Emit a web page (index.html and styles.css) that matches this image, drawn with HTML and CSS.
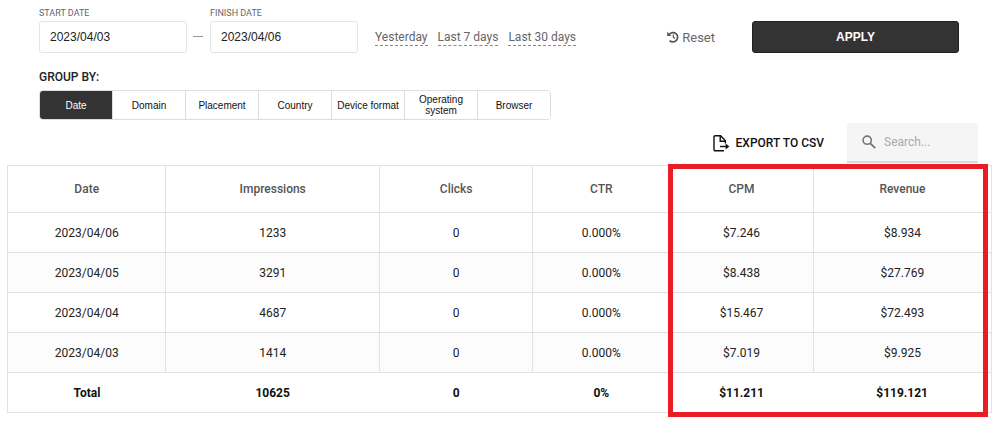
FILE: index.html
```
<!DOCTYPE html>
<html lang="en">
<head>
  <meta charset="UTF-8">
  <title>Statistics</title>
  <meta name="viewport" content="width=device-width, initial-scale=1">
  <link rel="stylesheet" href="styles.css">
</head>
<body>
  <form class="filters">
    <div class="filter-row">
      <div class="field">
        <label for="startDate">START DATE</label>
        <input type="text" id="startDate" value="2023/04/03">
      </div>
      <span class="dash"></span>
      <div class="field">
        <label for="finishDate">FINISH DATE</label>
        <input type="text" id="finishDate" value="2023/04/06">
      </div>
      <div class="presets">
        <a href="#">Yesterday</a>
        <a href="#">Last 7 days</a>
        <a href="#">Last 30 days</a>
      </div>
      <button class="reset-btn" type="reset">
        <svg width="12" height="12" viewBox="0 0 12 12" fill="none" stroke="#555" stroke-width="1.7">
          <path d="M2.2 3.4A4.7 4.7 0 1 1 2.6 9.6"/>
          <path d="M0.2 0.8V5H4.4Z" fill="#555" stroke="none"/>
          <path d="M6.3 3.4V6.3L8 7.5" stroke-width="1.2"/>
        </svg>
        Reset
      </button>
      <button class="apply-btn" type="submit">APPLY</button>
    </div>

    <div class="group-title">GROUP BY:</div>
    <div class="group">
      <button type="button" class="active">Date</button>
      <button type="button">Domain</button>
      <button type="button">Placement</button>
      <button type="button">Country</button>
      <button type="button">Device format</button>
      <button type="button">Operating system</button>
      <button type="button">Browser</button>
    </div>
  </form>

  <div class="toolbar">
    <button class="export-btn" type="button">
      <svg width="17" height="17" viewBox="0 0 17 17" fill="none" stroke="#111" stroke-width="1.4">
        <path d="M11 15.7H2.2Q1 15.7 1 14.5V2Q1 0.8 2.2 0.8H7.6L12.4 5.8V8.6"/>
        <path d="M7.2 1V6.2H12.4"/>
        <path d="M7 11.5H15"/>
        <path d="M12.6 8.6L16.4 11.5L12.6 14.4Z" fill="#111" stroke="none"/>
      </svg>
      EXPORT TO CSV
    </button>
    <label class="search">
      <svg width="14" height="14" viewBox="0 0 14 14" fill="none" stroke="#777" stroke-width="1.6">
        <circle cx="5.2" cy="5.2" r="4.1"/>
        <path d="M8.3 8.3L13.2 13.2" stroke-width="1.9"/>
      </svg>
      <input type="text" placeholder="Search..." aria-label="Search">
    </label>
  </div>

  <div class="table-wrap">
    <table>
      <colgroup>
        <col class="c-date">
        <col class="c-impressions">
        <col class="c-clicks">
        <col class="c-ctr">
        <col class="c-cpm">
        <col class="c-revenue">
      </colgroup>
      <thead>
        <tr><th>Date</th><th>Impressions</th><th>Clicks</th><th>CTR</th><th>CPM</th><th>Revenue</th></tr>
      </thead>
      <tbody>
        <tr><td>2023/04/06</td><td>1233</td><td>0</td><td>0.000%</td><td>$7.246</td><td>$8.934</td></tr>
        <tr><td>2023/04/05</td><td>3291</td><td>0</td><td>0.000%</td><td>$8.438</td><td>$27.769</td></tr>
        <tr><td>2023/04/04</td><td>4687</td><td>0</td><td>0.000%</td><td>$15.467</td><td>$72.493</td></tr>
        <tr><td>2023/04/03</td><td>1414</td><td>0</td><td>0.000%</td><td>$7.019</td><td>$9.925</td></tr>
      </tbody>
      <tfoot>
        <tr><td>Total</td><td>10625</td><td>0</td><td>0%</td><td>$11.211</td><td>$119.121</td></tr>
      </tfoot>
    </table>
    <div class="highlight"></div>
  </div>
</body>
</html>
```
FILE: styles.css
```
* { box-sizing: border-box; }
body {
  margin: 0;
  padding: 8px 8px 24px 7px;
  font-family: Roboto, Arial, sans-serif;
  font-size: 12px;
  color: #222;
  background: #fff;
}
button { font-family: inherit; cursor: pointer; }

/* filters */
.filters { padding: 0 33px 0 32px; }
.filter-row {
  display: flex;
  align-items: flex-end;
}
.field { flex: 0 1 148px; min-width: 0; }
.field label {
  display: block;
  font-size: 9px;
  line-height: 10px;
  margin-bottom: 3px;
  color: #666;
}
.field input {
  display: block;
  width: 100%;
  height: 32px;
  padding: 0 10px;
  border: 1px solid #e4e4e4;
  border-radius: 3px;
  font-family: "Liberation Sans", Arial, sans-serif;
  font-size: 12px;
  color: #222;
  outline: none;
}
.dash {
  width: 10px;
  height: 1px;
  margin: 0 7px 16px 6px;
  background: #999;
}
.presets {
  display: flex;
  gap: 10px;
  margin: 0 0 7px 17px;
}
.presets a {
  color: #666;
  line-height: 15px;
  border-bottom: 1px dashed #888;
  text-decoration: none;
  white-space: nowrap;
}
.reset-btn {
  display: flex;
  align-items: center;
  gap: 3px;
  height: 32px;
  margin-left: auto;
  padding: 0;
  border: none;
  background: none;
  font-size: 13px;
  color: #666;
}
.apply-btn {
  flex: 0 1 207px;
  height: 32px;
  margin-left: 37px;
  border: 1px solid #222;
  border-radius: 3px;
  background: #333;
  color: #fff;
  font-family: "Liberation Sans", Arial, sans-serif;
  font-size: 12px;
  font-weight: 700;
}
.group-title {
  margin: 17px 0 6px;
  font-size: 12px;
  line-height: 14px;
  font-weight: 500;
}
.group {
  display: flex;
  width: 512px;
  max-width: 100%;
  border: 1px solid #ddd;
  border-radius: 4px;
  overflow: hidden;
}
.group button {
  flex: 1 1 0;
  height: 28px;
  padding: 0;
  border: none;
  border-left: 1px solid #ddd;
  background: #fff;
  color: #111;
  font-family: "Liberation Sans", Arial, sans-serif;
  font-size: 10px;
  line-height: 11px;
}
.group button:first-child { border-left: none; }
.group button.active { background: #333; color: #fff; }

/* export + search */
.toolbar {
  display: flex;
  justify-content: flex-end;
  align-items: center;
  gap: 23px;
  padding: 3px 14px 2px 0;
}
.export-btn {
  display: flex;
  align-items: center;
  gap: 6px;
  padding: 0;
  border: none;
  background: none;
  color: #111;
  font-size: 12px;
  font-weight: 500;
}
.search {
  display: flex;
  align-items: center;
  gap: 8px;
  width: 131px;
  height: 40px;
  padding: 0 15px;
  border-bottom: 2px solid #ddd8e0;
  border-radius: 3px 3px 0 0;
  background: #f5f5f5;
}
.search svg { flex: none; }
.search input {
  width: 100%;
  min-width: 0;
  padding: 0;
  border: none;
  background: none;
  outline: none;
  font-family: inherit;
  font-size: 12px;
}
.search input::placeholder { color: #aaa; }

/* report */
.table-wrap { position: relative; }
table {
  width: 100%;
  table-layout: fixed;
  border-collapse: collapse;
  border: 1px solid #e2e2e2;
  text-align: center;
}
.c-date { width: 16.1%; }
.c-impressions { width: 21.7%; }
.c-clicks { width: 15.6%; }
.c-ctr { width: 13.9%; }
.c-cpm { width: 14.6%; }
.c-revenue { width: 18.1%; }
th, td {
  height: 40px;
  padding: 0;
  border: 1px solid #e2e2e2;
}
th { height: 47px; color: #555; font-weight: 500; }
tbody tr:nth-child(even) { background: #fcfcfc; }
tfoot td { border-left: none; border-right: none; font-weight: 700; color: #111; }

/* red frame over the money columns */
.highlight {
  position: absolute;
  top: -1px;
  right: 4px;
  bottom: -4px;
  width: calc(33% - 5px);
  border: 5px solid #e91d25;
  pointer-events: none;
}
```
